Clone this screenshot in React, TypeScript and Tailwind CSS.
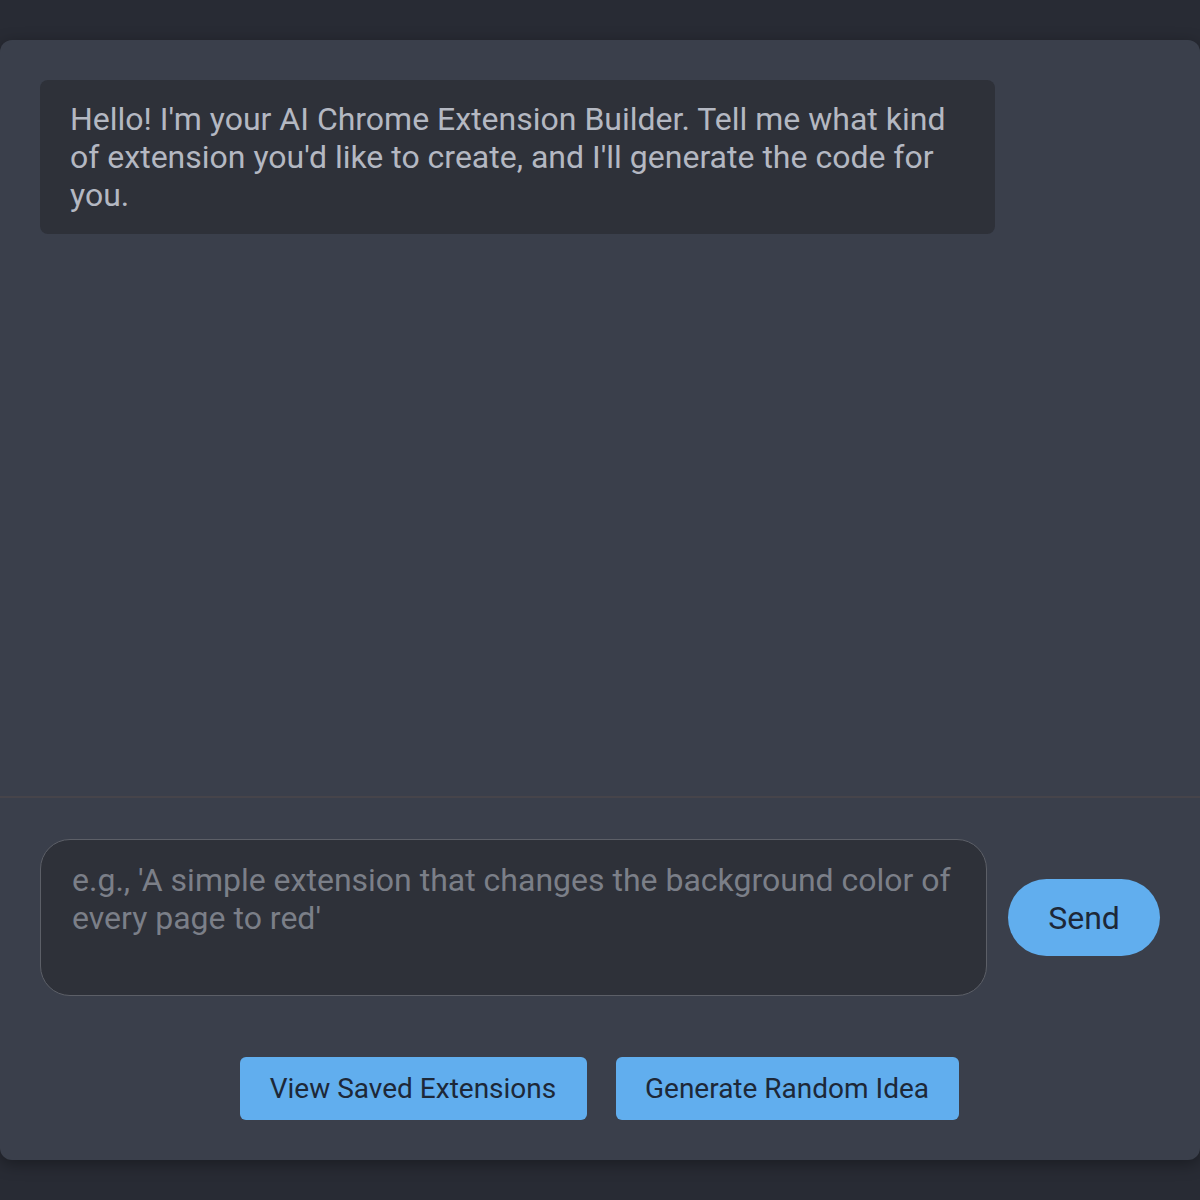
import { useState } from "react";

const bubbleText =
  "Hello! I'm your AI Chrome Extension Builder. Tell me what kind of extension you'd like to create, and I'll generate the code for you.";

export default function App() {
  const [prompt, setPrompt] = useState("");

  return (
    <div
      className="min-h-[1200px] w-full bg-[#282b34] pt-10 pb-10"
      style={{ fontFamily: "Roboto, 'Noto Sans', sans-serif" }}
    >
      <div className="flex h-[1120px] flex-col rounded-xl bg-[#3a3f4b] shadow-[0_4px_16px_rgba(0,0,0,0.35)]">
        {/* Chat log */}
        <div className="flex-1 p-10">
          <div className="w-[955px] rounded-lg bg-[#2e3139] px-[30px] py-5 text-[32px] leading-[38px] text-[#b4b8c2]">
            {bubbleText}
          </div>
        </div>

        {/* Input area */}
        <div className="border-t-2 border-[#46444a] px-10 pt-[41px] pb-10">
          <div className="flex items-center gap-[21px]">
            <textarea
              value={prompt}
              onChange={(e) => setPrompt(e.target.value)}
              placeholder="e.g., 'A simple extension that changes the background color of every page to red'"
              className="h-[157px] flex-1 resize-none rounded-[30px] border border-[#5c5f67] bg-[#2e3139] px-[31px] pt-[21px] text-[32px] leading-[38px] text-[#c8ccd4] outline-none placeholder:text-[#7b7f88]"
              style={{ fontFamily: "Roboto, 'Noto Sans', sans-serif" }}
            />
            <button
              type="button"
              className="h-[77px] w-[152px] rounded-full bg-[#61aeee] text-[32px] text-[#1d2838]"
            >
              Send
            </button>
          </div>

          <div className="mt-[61px] flex justify-center gap-[29px] pr-[2px]">
            <button
              type="button"
              className="h-[63px] w-[347px] rounded-md bg-[#61aeee] text-[28px] text-[#1d2838]"
            >
              View Saved Extensions
            </button>
            <button
              type="button"
              className="h-[63px] w-[343px] rounded-md bg-[#61aeee] text-[28px] text-[#1d2838]"
            >
              Generate Random Idea
            </button>
          </div>
        </div>
      </div>
    </div>
  );
}
